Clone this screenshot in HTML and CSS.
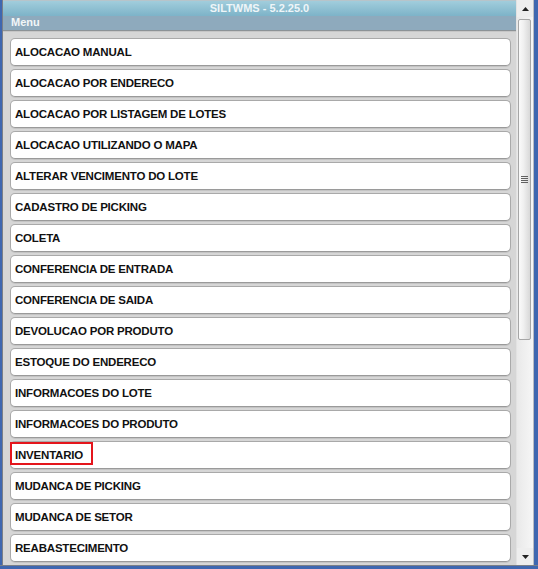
FILE: index.html
```html
<!DOCTYPE html>
<html>
<head>
<meta charset="utf-8">
<link rel="stylesheet" href="styles.css">
</head>
<body>
<div class="frame">
  <div class="row">
    <div class="lborder"></div>
    <div class="page">
      <div class="titlebar">SILTWMS - 5.2.25.0</div>
      <div class="menubar">Menu</div>
      <div class="list">
        <div class="btn">ALOCACAO MANUAL</div>
        <div class="btn">ALOCACAO POR ENDERECO</div>
        <div class="btn">ALOCACAO POR LISTAGEM DE LOTES</div>
        <div class="btn">ALOCACAO UTILIZANDO O MAPA</div>
        <div class="btn">ALTERAR VENCIMENTO DO LOTE</div>
        <div class="btn">CADASTRO DE PICKING</div>
        <div class="btn">COLETA</div>
        <div class="btn">CONFERENCIA DE ENTRADA</div>
        <div class="btn">CONFERENCIA DE SAIDA</div>
        <div class="btn">DEVOLUCAO POR PRODUTO</div>
        <div class="btn">ESTOQUE DO ENDERECO</div>
        <div class="btn">INFORMACOES DO LOTE</div>
        <div class="btn">INFORMACOES DO PRODUTO</div>
        <div class="btn">INVENTARIO<span class="mark"></span></div>
        <div class="btn">MUDANCA DE PICKING</div>
        <div class="btn">MUDANCA DE SETOR</div>
        <div class="btn">REABASTECIMENTO</div>
      </div>
    </div>
    <div class="scrollbar">
      <div class="arrow"><svg width="7" height="4" viewBox="0 0 7 4"><path d="M0 4 L3.5 0 L7 4 Z" fill="#222"/></svg></div>
      <div class="track">
        <div class="thumb">
          <div class="grip"><i></i><i></i><i></i><i></i></div>
        </div>
      </div>
      <div class="arrow down"><svg width="7" height="4" viewBox="0 0 7 4"><path d="M0 0 L7 0 L3.5 4 Z" fill="#222"/></svg></div>
    </div>
    <div class="rborder"></div>
  </div>
  <div class="bborder"></div>
</div>
</body>
</html>
```
FILE: styles.css
```css
html, body {
  margin: 0;
  padding: 0;
  width: 538px;
  height: 569px;
  overflow: hidden;
  background: #d6d6d6;
  font-family: "Liberation Sans", Arial, sans-serif;
}
.frame {
  width: 538px;
  height: 569px;
  display: flex;
  flex-direction: column;
}
.row {
  flex: 1;
  display: flex;
  min-height: 0;
}
.lborder {
  width: 2px;
  background: #3f67b0;
  border-right: 1px solid #7a7f88;
}
.rborder {
  width: 4px;
  background: #3f67b0;
  border-left: 1px solid #b8bcc4;
}
.bborder {
  height: 3px;
  background: #3f67b0;
  border-top: 1px solid #7a7f88;
}
.page {
  flex: 1;
  min-width: 0;
  display: flex;
  flex-direction: column;
  overflow: hidden;
  background: #d6d6d6;
}
.titlebar {
  height: 16px;
  line-height: 15px;
  box-sizing: border-box;
  border-top: 1px solid #b7c4ca;
  background: linear-gradient(#a1cddc, #7db3c8);
  color: #eef5f8;
  font-size: 11px;
  font-weight: bold;
  text-align: center;
  flex: none;
}
.menubar {
  height: 14px;
  line-height: 13px;
  background: #8eaabd;
  color: #f2f6f8;
  font-size: 11px;
  font-weight: bold;
  padding-left: 8px;
  border-bottom: 1px solid #8c9296;
  flex: none;
}
.list {
  display: flex;
  flex-direction: column;
  gap: 3px;
  padding: 6px 5px 0 7px;
  border-top: 1px solid #c6c6c6;
}
.btn {
  position: relative;
  flex: none;
  height: 26px;
  line-height: 26px;
  background: #fff;
  border: 1px solid #a9a9a9;
  border-bottom-color: #9a9a9a;
  border-radius: 5px;
  box-shadow: 0 1px 0 #c4c4c4;
  padding-left: 4px;
  font-size: 11.5px;
  letter-spacing: -0.2px;
  font-weight: bold;
  color: #111;
}
.mark {
  position: absolute;
  left: -1px;
  top: 0px;
  width: 79px;
  height: 19px;
  border: 2px solid #e4151c;
}
.scrollbar {
  width: 17px;
  flex: none;
  display: flex;
  flex-direction: column;
  background: #eeeeee;
  border-left: 1px solid #e2e2e2;
  box-sizing: border-box;
}
.arrow {
  height: 17px;
  flex: none;
  display: flex;
  align-items: center;
  justify-content: center;
}
.track {
  flex: 1;
  padding: 2px 0 0 1px;
  background: linear-gradient(90deg, #e9e9e9, #f6f6f6);
}
.thumb {
  width: 13px;
  height: 321px;
  box-sizing: border-box;
  border: 1px solid #a6a6a6;
  border-radius: 2px;
  background: linear-gradient(90deg, #fafafa 0%, #f0f0f0 40%, #d8d8d8 100%);
  display: flex;
  align-items: center;
  justify-content: center;
}
.grip {
  display: flex;
  flex-direction: column;
  gap: 1px;
}
.grip i {
  display: block;
  width: 7px;
  height: 1px;
  background: #606060;
}
```
